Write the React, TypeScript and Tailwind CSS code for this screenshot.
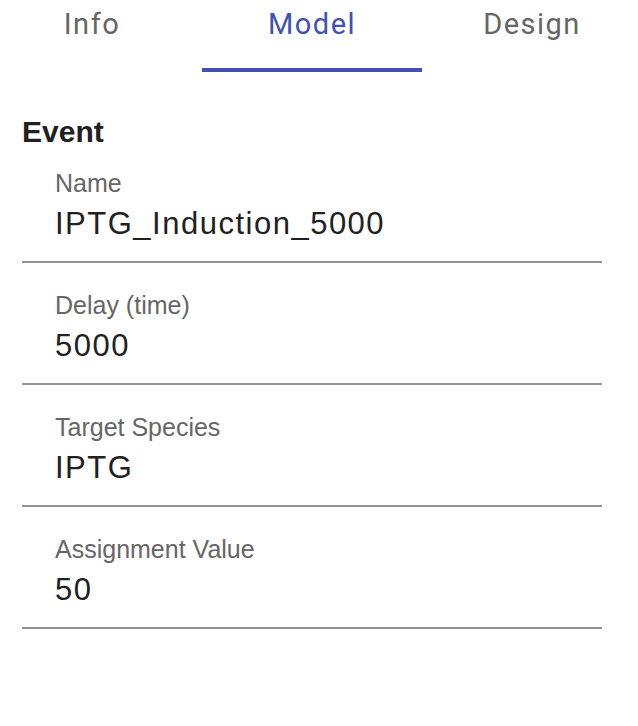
const tabs = [
  { label: 'Info', active: false },
  { label: 'Model', active: true },
  { label: 'Design', active: false },
];

const fields = [
  { label: 'Name', value: 'IPTG_Induction_5000' },
  { label: 'Delay (time)', value: '5000' },
  { label: 'Target Species', value: 'IPTG' },
  { label: 'Assignment Value', value: '50' },
];

export default function App() {
  return (
    <div className="w-[638px] h-[726px] bg-white overflow-hidden font-['Liberation_Sans',Arial,sans-serif]">
      {/* Tabs */}
      <div className="flex ml-[-18px]">
        {tabs.map((t) => (
          <div key={t.label} className="w-[220px] shrink-0 h-[72px] flex flex-col justify-between items-center">
            <span
              className={
                t.active
                  ? "pt-[7px] font-['Roboto',sans-serif] text-[29px] leading-[34px] tracking-[1.5px] text-[#3f51b5]"
                  : "pt-[7px] font-['Roboto',sans-serif] text-[29px] leading-[34px] tracking-[1.5px] text-[#666666]"
              }
            >
              {t.label}
            </span>
            <div className={t.active ? 'w-full h-[4px] bg-[#3f51b5]' : 'w-full h-[4px]'} />
          </div>
        ))}
      </div>

      <div className="mx-[22px] w-[580px]">
        <h2 className="mt-[42px] text-[30px] leading-[36px] font-bold text-[#212121]">Event</h2>

        {fields.map((f, i) => (
          <div
            key={f.label}
            className={
              i === 0
                ? 'pt-[18px] pb-[19px] pl-[33px] border-b-2 border-[#939393]'
                : 'pt-[27px] pb-[19px] pl-[33px] border-b-2 border-[#939393]'
            }
          >
            <div className="text-[25px] leading-[30px] text-[#666666]">{f.label}</div>
            <div className="mt-[8px] text-[31px] leading-[36px] tracking-[1.5px] text-[#212121]">{f.value}</div>
          </div>
        ))}
      </div>
    </div>
  );
}
